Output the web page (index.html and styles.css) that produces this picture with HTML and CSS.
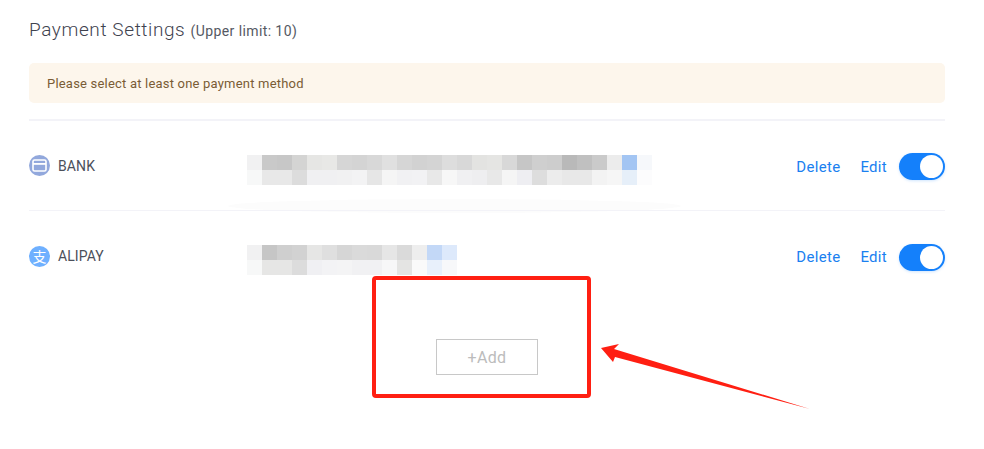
FILE: index.html
```html
<!DOCTYPE html>
<html lang="en">
<head>
    <meta charset="UTF-8">
    <meta name="viewport" content="width=device-width, initial-scale=1.0">
    <title>Payment Settings</title>
    <link rel="stylesheet" href="styles.css">
</head>
<body>
    <div class="page">
        <h3 class="title">Payment Settings <small>(Upper limit: 10)</small></h3>
        <div class="notice">Please select at least one payment method</div>

        <div class="row">
            <div class="method">
                <span class="badge bank">
                    <svg width="15" height="13" viewBox="0 0 15 13">
                        <rect x="1" y="1" width="13" height="11" rx="1.5" fill="none" stroke="#fff" stroke-width="1.6"/>
                        <rect x="1" y="4" width="13" height="1.8" fill="#fff"/>
                    </svg>
                </span>
                <span class="method-name">BANK</span>
            </div>
            <svg class="mosaic bank-mosaic" width="405" height="30" viewBox="0 0 405 30">
                <g>
                    <rect x="0" y="0" width="15" height="15" fill="#f1f1f2"/>
                    <rect x="15" y="0" width="15" height="15" fill="#c9c9c9"/>
                    <rect x="30" y="0" width="15" height="15" fill="#c7c7c7"/>
                    <rect x="45" y="0" width="15" height="15" fill="#d4d4d3"/>
                    <rect x="60" y="0" width="15" height="15" fill="#e6e6e4"/>
                    <rect x="75" y="0" width="15" height="15" fill="#e8e8e6"/>
                    <rect x="90" y="0" width="15" height="15" fill="#d6d6d6"/>
                    <rect x="105" y="0" width="15" height="15" fill="#d4d4d4"/>
                    <rect x="120" y="0" width="15" height="15" fill="#d8d8d8"/>
                    <rect x="135" y="0" width="15" height="15" fill="#e0e0e0"/>
                    <rect x="150" y="0" width="15" height="15" fill="#d6d6d6"/>
                    <rect x="165" y="0" width="15" height="15" fill="#d2d2d2"/>
                    <rect x="180" y="0" width="15" height="15" fill="#d4d4d4"/>
                    <rect x="195" y="0" width="15" height="15" fill="#dddddd"/>
                    <rect x="210" y="0" width="15" height="15" fill="#d8d8d8"/>
                    <rect x="225" y="0" width="15" height="15" fill="#e3e3e1"/>
                    <rect x="240" y="0" width="15" height="15" fill="#e5e5e3"/>
                    <rect x="255" y="0" width="15" height="15" fill="#d8d8d8"/>
                    <rect x="270" y="0" width="15" height="15" fill="#c6c6c6"/>
                    <rect x="285" y="0" width="15" height="15" fill="#cfcfcf"/>
                    <rect x="300" y="0" width="15" height="15" fill="#cdcdcd"/>
                    <rect x="315" y="0" width="15" height="15" fill="#b9b9b9"/>
                    <rect x="330" y="0" width="15" height="15" fill="#c0c0c0"/>
                    <rect x="345" y="0" width="15" height="15" fill="#cacaca"/>
                    <rect x="360" y="0" width="15" height="15" fill="#ececec"/>
                    <rect x="375" y="0" width="15" height="15" fill="#a3c5f3"/>
                    <rect x="390" y="0" width="15" height="15" fill="#f6f8fb"/>
                </g>
                <g>
                    <rect x="0" y="15" width="15" height="15" fill="#f7f8f8"/>
                    <rect x="15" y="15" width="15" height="15" fill="#e8e8e8"/>
                    <rect x="30" y="15" width="15" height="15" fill="#e8e8e8"/>
                    <rect x="45" y="15" width="15" height="15" fill="#dcdcdc"/>
                    <rect x="60" y="15" width="15" height="15" fill="#f0f0f2"/>
                    <rect x="75" y="15" width="15" height="15" fill="#f0f0f2"/>
                    <rect x="90" y="15" width="15" height="15" fill="#f1f1f2"/>
                    <rect x="105" y="15" width="15" height="15" fill="#f3f3f4"/>
                    <rect x="120" y="15" width="15" height="15" fill="#e6e6e6"/>
                    <rect x="135" y="15" width="15" height="15" fill="#f5f5f5"/>
                    <rect x="150" y="15" width="15" height="15" fill="#f1f1f3"/>
                    <rect x="165" y="15" width="15" height="15" fill="#f2f2f4"/>
                    <rect x="180" y="15" width="15" height="15" fill="#e8e8e8"/>
                    <rect x="195" y="15" width="15" height="15" fill="#f7f7f7"/>
                    <rect x="210" y="15" width="15" height="15" fill="#f0f0f2"/>
                    <rect x="225" y="15" width="15" height="15" fill="#eeeef0"/>
                    <rect x="240" y="15" width="15" height="15" fill="#e8e8e8"/>
                    <rect x="255" y="15" width="15" height="15" fill="#f5f5f5"/>
                    <rect x="270" y="15" width="15" height="15" fill="#eeeef2"/>
                    <rect x="285" y="15" width="15" height="15" fill="#dddddd"/>
                    <rect x="300" y="15" width="15" height="15" fill="#ececec"/>
                    <rect x="315" y="15" width="15" height="15" fill="#e8e8e8"/>
                    <rect x="330" y="15" width="15" height="15" fill="#e8e8e8"/>
                    <rect x="345" y="15" width="15" height="15" fill="#f3f3f3"/>
                    <rect x="360" y="15" width="15" height="15" fill="#f6f6f6"/>
                    <rect x="375" y="15" width="15" height="15" fill="#e6eff9"/>
                    <rect x="390" y="15" width="15" height="15" fill="#fcfcfd"/>
                </g>
            </svg>
            <div class="actions">
                <a class="link">Delete</a>
                <a class="link">Edit</a>
                <span class="switch"><span class="knob"></span></span>
            </div>
            <div class="smudge"></div>
        </div>

        <div class="row last">
            <div class="method">
                <span class="badge alipay">支</span>
                <span class="method-name">ALIPAY</span>
            </div>
            <svg class="mosaic" width="210" height="30" viewBox="0 0 210 30">
                <g>
                    <rect x="0" y="0" width="15" height="15" fill="#f1f1f2"/>
                    <rect x="15" y="0" width="15" height="15" fill="#c6c6c6"/>
                    <rect x="30" y="0" width="15" height="15" fill="#cfcfcf"/>
                    <rect x="45" y="0" width="15" height="15" fill="#d2d2d2"/>
                    <rect x="60" y="0" width="15" height="15" fill="#e6e6e5"/>
                    <rect x="75" y="0" width="15" height="15" fill="#dfdfdf"/>
                    <rect x="90" y="0" width="15" height="15" fill="#d6d6d6"/>
                    <rect x="105" y="0" width="15" height="15" fill="#dadada"/>
                    <rect x="120" y="0" width="15" height="15" fill="#d9d9d9"/>
                    <rect x="135" y="0" width="15" height="15" fill="#e6e6e6"/>
                    <rect x="150" y="0" width="15" height="15" fill="#dadada"/>
                    <rect x="165" y="0" width="15" height="15" fill="#eeeeee"/>
                    <rect x="180" y="0" width="15" height="15" fill="#c3d8f7"/>
                    <rect x="195" y="0" width="15" height="15" fill="#dde9fb"/>
                </g>
                <g>
                    <rect x="0" y="15" width="15" height="15" fill="#f7f8f8"/>
                    <rect x="15" y="15" width="15" height="15" fill="#e6e6e5"/>
                    <rect x="30" y="15" width="15" height="15" fill="#e6e6e5"/>
                    <rect x="45" y="15" width="15" height="15" fill="#dcdcdc"/>
                    <rect x="60" y="15" width="15" height="15" fill="#f0f0f3"/>
                    <rect x="75" y="15" width="15" height="15" fill="#f3f3f5"/>
                    <rect x="90" y="15" width="15" height="15" fill="#f4f4f5"/>
                    <rect x="105" y="15" width="15" height="15" fill="#f1f1f3"/>
                    <rect x="120" y="15" width="15" height="15" fill="#f1f1f3"/>
                    <rect x="135" y="15" width="15" height="15" fill="#f7f7f8"/>
                    <rect x="150" y="15" width="15" height="15" fill="#e4e4e3"/>
                    <rect x="165" y="15" width="15" height="15" fill="#fafafa"/>
                    <rect x="180" y="15" width="15" height="15" fill="#e8f0fb"/>
                    <rect x="195" y="15" width="15" height="15" fill="#f7f8fa"/>
                </g>
            </svg>
            <div class="actions">
                <a class="link">Delete</a>
                <a class="link">Edit</a>
                <span class="switch"><span class="knob"></span></span>
            </div>
        </div>

        <div class="add-wrap">
            <button class="add-btn">+Add</button>
        </div>
    </div>

    <!-- red annotation drawn on top of the screenshot -->
    <div class="callout-box"></div>
    <svg class="callout-arrow" width="984" height="449" viewBox="0 0 984 449">
        <polygon points="601,348 619,344 614,349 810,409 615,357 613,362" fill="#ff1f12"/>
    </svg>
</body>
</html>
```

FILE: styles.css
```css
body {
    margin: 0;
    background-color: #fff;
    font-family: Roboto, "Noto Sans", sans-serif;
    color: #454a55;
    height: 449px;
    overflow: hidden;
}

.page {
    padding: 18px 39px 0 29px;
}

.title {
    margin: 0;
    font-size: 19px;
    line-height: 24px;
    font-weight: 300;
    letter-spacing: 0.6px;
    color: #3f434f;
}

.title small {
    font-size: 14px;
    font-weight: 400;
    letter-spacing: 0.4px;
    color: #555963;
}

.notice {
    margin-top: 20px;
    height: 40px;
    line-height: 42px;
    padding-left: 18px;
    background-color: #fdf6ec;
    border-radius: 5px;
    font-size: 13px;
    letter-spacing: 0.2px;
    color: #7a5c35;
}

.row {
    position: relative;
    display: flex;
    align-items: center;
    height: 89px;
    margin-top: 16px;
    border-top: 2px solid #f3f3f8;
}

.row.last {
    margin-top: 0;
    height: 90px;
    border-top-width: 1px;
}

.method {
    display: flex;
    align-items: center;
    width: 218px;
}

.badge {
    display: flex;
    justify-content: center;
    align-items: center;
    width: 21px;
    height: 21px;
    border-radius: 50%;
    color: #fff;
    font-size: 14px;
    line-height: 21px;
    font-family: "Noto Sans CJK SC", sans-serif;
}

.badge.bank {
    background-color: #92a8dc;
}

.badge.alipay {
    background-color: #6fb0ff;
}

.method-name {
    margin-left: 8px;
    font-size: 14px;
    letter-spacing: 0.1px;
    color: #4c505b;
}

.mosaic {
    display: block;
    margin-top: 8px;
}

.mosaic.bank-mosaic {
    margin-top: 9px;
}

.actions {
    display: flex;
    align-items: center;
    margin-left: auto;
    margin-top: 2px;
}

.link {
    margin-right: 20px;
    font-size: 15px;
    letter-spacing: 0.3px;
    color: #1a80f0;
}

.link + .link {
    margin-right: 12px;
}

.switch {
    display: flex;
    justify-content: flex-end;
    align-items: center;
    width: 46px;
    height: 27px;
    padding-right: 2px;
    box-sizing: border-box;
    border-radius: 14px;
    background-color: #1480fb;
    box-shadow: 0 1px 3px rgba(20, 128, 251, 0.2);
}

.knob {
    width: 23px;
    height: 23px;
    border-radius: 50%;
    background-color: #fff;
}

/* faint smear left by the mosaic tool, hides part of the divider */
.smudge {
    position: absolute;
    left: 199px;
    top: 78px;
    width: 453px;
    height: 14px;
    border-radius: 50%;
    background-color: #fcfcfc;
}

.add-wrap {
    display: flex;
    justify-content: center;
    margin-top: 38px;
}

.add-btn {
    width: 102px;
    height: 36px;
    padding: 0;
    background: #fff;
    border: 1px solid #c8c8c8;
    font-family: inherit;
    font-size: 16px;
    letter-spacing: 0.3px;
    color: #bcbcbc;
}

.callout-box {
    position: absolute;
    left: 372px;
    top: 276px;
    width: 219px;
    height: 122px;
    box-sizing: border-box;
    border: 4px solid #ff1f12;
    border-radius: 4px;
}

.callout-arrow {
    position: absolute;
    left: 0;
    top: 0;
    pointer-events: none;
}
```
